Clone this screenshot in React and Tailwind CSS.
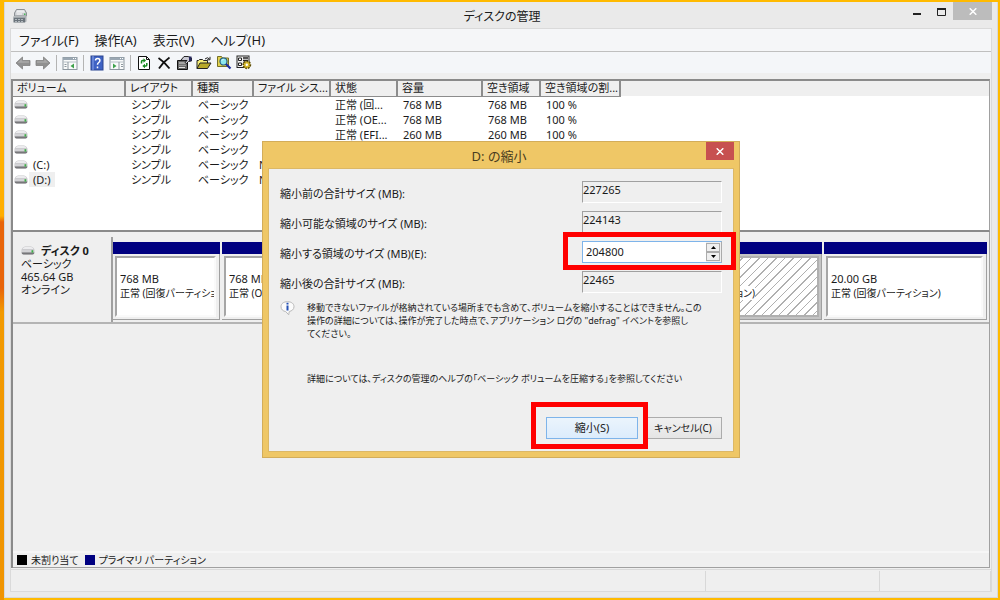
import { useState } from "react";

const columns = [
  { name: "ボリューム", width: "w-[112px]" },
  { name: "レイアウト", width: "w-[67px]" },
  { name: "種類", width: "w-[61px]" },
  { name: "ファイル シス...", width: "w-[77px]" },
  { name: "状態", width: "w-[67px]" },
  { name: "容量", width: "w-[85px]" },
  { name: "空き領域", width: "w-[58px]" },
  { name: "空き領域の割...", width: "w-[80px]" },
];

const volumes = [
  { id: 1, name: "", fs: "", status: "正常 (回...", size: "768 MB", free: "768 MB", rate: "100 %" },
  { id: 2, name: "", fs: "", status: "正常 (OE...", size: "768 MB", free: "768 MB", rate: "100 %" },
  { id: 3, name: "", fs: "", status: "正常 (EFI...", size: "260 MB", free: "260 MB", rate: "100 %" },
  { id: 4, name: "", fs: "" },
  { id: 5, name: "(C:)", fs: "NTFS" },
  { id: 6, name: "(D:)", fs: "NTFS", selected: true },
];

const partitions = [
  { id: 1, size: "768 MB", status: "正常 (回復パーティション)", width: "w-[107px]" },
  { id: 2, size: "768 MB", status: "正常 (OEM)", width: "w-[107px]" },
  { id: 3, size: "", status: "", width: "flex-1" },
  { id: 4, size: "", status: "正常 (プライマリ パーティション)", width: "w-[210px]", hatched: true },
  { id: 5, size: "20.00 GB", status: "正常 (回復パーティション)", width: "w-[163px]" },
];

function DriveIcon() {
  return (
    <svg width="14" height="9" viewBox="0 0 14 9" className="shrink-0">
      <path d="M4 .5h6q2.200 0 3.200 2.600.3.700.3 1.900v1.500q0 2-2 2h-9q-2 0-2-2V5q0-1.200.3-1.900Q1.800.5 4 .5z" fill="#c6c6c8" />
      <path d="M4 1h6q1.700 0 2.600 2H1.400Q2.300 1 4 1z" fill="#ececee" />
      <path d="M1 3.600h12v2.600H1z" fill="#d3d3d6" />
      <path d="M.6 6.600h12.800q-.1 1.900-1.900 1.900h-9Q.7 8.500.6 6.600z" fill="#77777a" />
      <rect x="10.500" y="4.200" width="1.800" height="2.400" fill="#3fae49" />
    </svg>
  );
}

function AppIcon() {
  return (
    <svg width="16" height="16" viewBox="0 0 16 16">
      <path d="M4.500 1.500h8l2 3.500v3h-12V5z" fill="#c9cccf" stroke="#8d9195" />
      <path d="M5 2.300h7l1.200 2.400H4z" fill="#eceeef" />
      <path d="M4.500 6h5.500" stroke="#fff" />
      <rect x="12" y="5.500" width="1.500" height="1.500" fill="#49b857" />
      <path d="M1.500 8.500h11.500v6H1.500z" fill="#6b747b" />
      <path d="M13 8.500l1.500-1v6L13 14.500z" fill="#a9aeb2" />
      <path d="M1.500 9h11.500" stroke="#d5d8da" />
      <path d="M3 11.500h2M6 11.500h2M9 11.500h2M3 13.500h2M6 13.500h2M9 13.500h2" stroke="#b3b9be" />
    </svg>
  );
}

function ArrowIcon({ right }) {
  return (
    <svg width="16" height="14" viewBox="0 0 16 14" className={right ? "-scale-x-100" : ""}>
      <path d="M1 7l6.500-6v3.500H15v5H7.500V13z" fill="#919191" stroke="#808080" strokeWidth=".8" />
      <path d="M2.500 6.800L6.800 3v2.300H14v1.500z" fill="#a9a9a9" />
    </svg>
  );
}

function PaneIcon({ right }) {
  return (
    <svg width="16" height="14" viewBox="0 0 16 14">
      <rect x="1" y="1.500" width="14" height="12" fill="#f9fafa" stroke="#8d979f" />
      <rect x="1" y="1.500" width="14" height="2.500" fill="#9aa7b3" />
      <path d="M11 2.500h1M13 2.500h1" stroke="#fff" />
      <path d="M1 6h14" stroke="#b6bfc6" />
      <path d={right ? "M10 6v7.500M12 8.500h2M12 10.500h2" : "M6 6v7.500M2.500 8.500h2M2.500 10.500h2"} stroke="#8d979f" />
      <path d={right ? "M4 7.500v5L7.500 10z" : "M12 7.500v5L8.500 10z"} fill="#3fa24c" />
    </svg>
  );
}

function HelpIcon() {
  return (
    <svg width="14" height="16" viewBox="0 0 14 16">
      <rect x="1" y="1" width="12" height="14" fill="#3e62c4" stroke="#2b448f" />
      <path d="M3 1v14" stroke="#8aa4ea" />
      <path d="M5.500 5.500q0-2 2.200-2t2.200 2q0 1.200-1.200 2T7.500 9.800M7.500 11.500v1.700" fill="none" stroke="#fff" strokeWidth="1.500" />
    </svg>
  );
}

function RefreshIcon() {
  return (
    <svg width="14" height="16" viewBox="0 0 14 16">
      <path d="M1.500 1.500h8l3 3v10h-11z" fill="#fff" stroke="#111" />
      <path d="M9.500 1.500v3h3" fill="none" stroke="#111" />
      <path d="M4.500 8.500V6.500q0-1 1-1H7" fill="none" stroke="#16891f" strokeWidth="1.500" />
      <path d="M6.500 3.200v4.600L9 5.500z" fill="#16891f" />
      <path d="M9.800 8v2q0 1-1 1H7.500" fill="none" stroke="#16891f" strokeWidth="1.500" />
      <path d="M8 8.700v4.600L5.300 11z" fill="#16891f" />
    </svg>
  );
}

function DeleteIcon() {
  return (
    <svg width="14" height="14" viewBox="0 0 14 14">
      <path d="M1.500 2q6 4 11 10.500M12.500 1.500Q6 6 2 12.500" fill="none" stroke="#111" strokeWidth="1.800" />
    </svg>
  );
}

function PropertiesIcon() {
  return (
    <svg width="16" height="16" viewBox="0 0 16 16">
      <path d="M1.500 5.500h10v9h-10z" fill="#666" stroke="#111" />
      <path d="M3 8h7M3 12.500h6" stroke="#e4e4e4" />
      <path d="M3 10.300h7" stroke="#a5a5a5" />
      <path d="M5 5l3-3.500h4L15.500 3v3l-3 .5-2 2-1.500-1L11 5.500H7z" fill="#c9c9d3" stroke="#111" strokeWidth=".9" />
      <path d="M13 1.500h2.500V6H13z" fill="#27275c" />
    </svg>
  );
}

function FolderIcon() {
  return (
    <svg width="16" height="14" viewBox="0 0 16 14">
      <path d="M1 12.500V4.500h1.500L3.500 3.500h3l1 1h4v2.500" fill="#f6ee77" stroke="#222" />
      <path d="M1 12.500L4 7h11l-3.500 5.500z" fill="#b8a92a" stroke="#222" />
      <path d="M9 3q2.500-2.500 4.500 0M14 .8v3h-3" fill="none" stroke="#222" />
    </svg>
  );
}

function SearchIcon() {
  return (
    <svg width="16" height="15" viewBox="0 0 16 15">
      <path d="M1.500 1.500h4l1 1.500h6v8.500h-11z" fill="#e3d24e" stroke="#777025" />
      <circle cx="7.500" cy="6.500" r="3.500" fill="#8be7ee" stroke="#245f84" strokeWidth="1.200" />
      <path d="M6 5.500L7.500 4" stroke="#fff" />
      <path d="M10 9l4.500 4.500" stroke="#1e2d9c" strokeWidth="2.200" />
    </svg>
  );
}

function SettingsIcon() {
  return (
    <svg width="16" height="15" viewBox="0 0 16 15">
      <rect x="1" y="1" width="12" height="11.500" fill="#f4f4f4" stroke="#222" />
      <path d="M2.500 3h3v2.500h-3zM2.500 8h3v2.500h-3z" fill="#fff" stroke="#222" />
      <path d="M7 3h5M7 5.500h5M7 8h2" stroke="#222" strokeWidth="1.300" />
      <circle cx="10.800" cy="9.800" r="3.600" fill="#d6b92b" stroke="#5d4d0a" strokeDasharray="1.600 1.100" strokeWidth="1.600" />
      <circle cx="10.800" cy="9.800" r="1.200" fill="#fff" />
    </svg>
  );
}

function InfoIcon() {
  return (
    <svg width="15" height="15" viewBox="0 0 15 15" className="shrink-0">
      <path d="M7.500 .7c4 0 6.500 2 6.500 5 0 2.700-2.200 4.300-4.700 4.800l-.6 3.300-3-3.200C3 10.200 1 8.400 1 5.700c0-3 2.500-5 6.500-5z" fill="#fbfbfb" stroke="#b9b9b9" />
      <path d="M6.500 1.800h2v1.700h-2zM6.500 4.500h2v5h-2z" fill="#2450b4" />
    </svg>
  );
}

function ToolButton({ label, children }) {
  return (
    <button aria-label={label} className="flex h-5 w-5 items-center justify-center">
      {children}
    </button>
  );
}

function Separator() {
  return <div className="mx-[3px] h-4 w-px bg-[#b4b4b4]" />;
}

function Toolbar() {
  return (
    <div className="flex h-[21px] items-center bg-[#f4f6f9] pl-0.5">
      <ToolButton label="戻る"><ArrowIcon /></ToolButton>
      <ToolButton label="進む"><ArrowIcon right /></ToolButton>
      <Separator />
      <ToolButton label="コンソール ツリー"><PaneIcon /></ToolButton>
      <Separator />
      <ToolButton label="ヘルプ"><HelpIcon /></ToolButton>
      <ToolButton label="操作ウィンドウ"><PaneIcon right /></ToolButton>
      <Separator />
      <ToolButton label="最新の情報に更新"><RefreshIcon /></ToolButton>
      <ToolButton label="削除"><DeleteIcon /></ToolButton>
      <ToolButton label="プロパティ"><PropertiesIcon /></ToolButton>
      <ToolButton label="開く"><FolderIcon /></ToolButton>
      <ToolButton label="検索"><SearchIcon /></ToolButton>
      <ToolButton label="設定"><SettingsIcon /></ToolButton>
    </div>
  );
}

function VolumeTable() {
  return (
    <div className="h-[153px] border-2 border-r border-[#8a8a8a] border-r-[#a0a0a0] bg-white">
      <table className="w-full table-fixed border-collapse text-left">
        <thead>
          <tr className="h-[15px] bg-[#efefef] leading-[14px]">
            {columns.map((col) => (
              <th
                key={col.name}
                className={`${col.width} overflow-hidden border-r-2 border-b border-[#8c8c8c] pl-1 font-normal whitespace-nowrap`}
              >
                {col.name}
              </th>
            ))}
            <td></td>
          </tr>
        </thead>
        <tbody>
          {volumes.map((v) => (
            <tr key={v.id} className="h-[15px] leading-[15px] whitespace-nowrap">
              <td>
                <div className="flex h-[15px] items-center gap-px pl-px">
                  <DriveIcon />
                  <span className={`px-1 ${v.selected ? "bg-[#efefef]" : ""}`}>{v.name}</span>
                </div>
              </td>
              <td className="pl-1.5">シンプル</td>
              <td className="pl-1.5">ベーシック</td>
              <td className="pl-1.5">{v.fs}</td>
              <td className="pl-[5px]">{v.status}</td>
              <td className="pl-1.5">{v.size}</td>
              <td className="pl-1.5">{v.free}</td>
              <td className="pl-1.5">{v.rate}</td>
              <td></td>
            </tr>
          ))}
        </tbody>
      </table>
    </div>
  );
}

function Partition({ part }) {
  return (
    <div className={`${part.width} flex shrink-0 flex-col`}>
      <div className="h-3 bg-[#000080]" />
      <div
        className={`h-[66px] border-r border-b border-[#a0a0a0] p-0.5 ${
          part.hatched ? "bg-[#c4c4c4]" : "pr-[3px]"
        }`}
      >
        <div
          className={`h-full overflow-hidden border-2 pl-[3px] leading-[14px] whitespace-nowrap ${
            part.hatched
              ? "border-[#b0b0b0] bg-[repeating-linear-gradient(135deg,#fff_0px,#fff_5px,#b0b0b0_5px,#b0b0b0_6px)]"
              : "border-t-[#a6a6a6] border-r-[#fafafa] border-b-[#fafafa] border-l-[#a6a6a6] bg-white"
          }`}
        >
          <div className="h-[14px]" />
          <div className="h-[14px]">{part.size}</div>
          <span className={part.hatched ? "bg-white text-[10px]" : "text-[10px]"}>{part.status}</span>
        </div>
      </div>
    </div>
  );
}

function DiskPane() {
  return (
    <div className="flex flex-1 flex-col border-r border-l-2 border-[#a0a0a0] border-l-[#8a8a8a] pt-[5px]">
      <div className="flex h-[87px] border-b-2 border-[#b4b4b4]">
        <div className="w-[100px] border-r-2 border-[#a0a0a0] pt-[7px] pl-2 leading-[13px]">
          <div className="flex items-center gap-1.5 font-bold">
            <DriveIcon />
            ディスク 0
          </div>
          <div>ベーシック</div>
          <div>465.64 GB</div>
          <div>オンライン</div>
        </div>
        <div className="flex flex-1 gap-0.5 pt-[5px] pr-0.5">
          {partitions.map((part) => (
            <Partition key={part.id} part={part} />
          ))}
        </div>
      </div>
      <div className="flex-1" />
      <div className="flex h-[17px] items-center border-t-2 border-b border-t-[#f6f6f6] border-b-[#a0a0a0] pl-1 text-[10px]">
        <div className="mr-1 h-2.5 w-2.5 bg-black" />
        未割り当て
        <div className="mr-1 ml-1.5 h-2.5 w-2.5 bg-[#000080]" />
        プライマリ パーティション
      </div>
    </div>
  );
}

function SizeField({ id, label, value }) {
  return (
    <div className="flex h-[22px] items-center justify-between">
      <label htmlFor={id} className="pt-1">{label}</label>
      <input
        id={id}
        readOnly
        value={value}
        className="h-[22px] w-[140px] border border-t-[#a0a0a0] border-r-white border-b-white border-l-[#a0a0a0] bg-[#efefef] pb-1.5 outline-none"
      />
    </div>
  );
}

function ShrinkDialog() {
  const [size, setSize] = useState(204800);
  const total = 227265;

  return (
    <div className="absolute inset-0 flex items-center justify-center">
      <div
        role="dialog"
        aria-labelledby="dialog-title"
        className="w-[478px] border border-[#d3ad5a] bg-[#efc766] px-[5px] pb-[5px]"
      >
        <div className="flex h-[26px]">
          <h2 id="dialog-title" className="flex-1 pt-1 pl-6 text-center text-[13px] leading-5 text-[#4a3d20]">
            D: の縮小
          </h2>
          <button aria-label="閉じる" className="flex h-[18px] w-7 items-center justify-center bg-[#c75050]">
            <svg width="8" height="7" viewBox="0 0 8 7">
              <path d="M.7 .3l6.600 6.400M7.300 .3L.7 6.700" stroke="#fff" strokeWidth="1.500" />
            </svg>
          </button>
        </div>

        <div className="border border-[#dcb866] bg-[#efefef] px-[11px] py-3">
          <div className="flex flex-col gap-2">
            <SizeField id="before" label="縮小前の合計サイズ (MB):" value={total} />
            <SizeField id="available" label="縮小可能な領域のサイズ (MB):" value={224143} />
            <div className="flex h-[22px] items-center justify-between">
              <label htmlFor="shrink" className="pt-1">縮小する領域のサイズ (MB)(E):</label>
              <div className="relative z-10 flex h-[22px] w-[140px] border border-[#7eb4ea] border-r-[#ababab] bg-white">
                <input
                  id="shrink"
                  inputMode="numeric"
                  value={size}
                  onChange={(e) => setSize(Number(e.target.value) || 0)}
                  className="w-full min-w-0 flex-1 pl-[3px] outline-none"
                />
                <div className="flex w-[15px] flex-col bg-[#efefef] py-px pr-px">
                  <button
                    aria-label="増やす"
                    onClick={() => setSize(size + 1)}
                    className="flex flex-1 items-center justify-center border border-[#acacac]"
                  >
                    <svg width="5" height="3" viewBox="0 0 5 3"><path d="M0 3L2.500 0 5 3z" /></svg>
                  </button>
                  <button
                    aria-label="減らす"
                    onClick={() => setSize(size - 1)}
                    className="flex flex-1 items-center justify-center border border-[#acacac]"
                  >
                    <svg width="5" height="3" viewBox="0 0 5 3"><path d="M0 0l2.500 3L5 0z" /></svg>
                  </button>
                </div>
                <div className="pointer-events-none absolute -top-2.5 -right-[15px] -bottom-2 -left-5 border-5 border-[#ff0000]" />
              </div>
            </div>
            <SizeField id="after" label="縮小後の合計サイズ (MB):" value={total - size} />
          </div>

          <div className="mt-2 flex gap-3 text-[9px] leading-[13px] whitespace-nowrap">
            <InfoIcon />
            <div>
              <p>
                移動できないファイルが格納されている場所までも含めて、ボリュームを縮小することはできません。この
                <br />
                操作の詳細については、操作が完了した時点で、アプリケーション ログの "defrag" イベントを参照し
                <br />
                てください。
              </p>
              <p className="mt-8">
                詳細については、ディスクの管理のヘルプの「ベーシック ボリュームを圧縮する」を参照してください
              </p>
            </div>
          </div>

          <div className="mt-8 flex justify-end gap-1.5">
            <div className="relative z-10">
              <button className="h-[22px] w-[92px] border border-[#7eb4ea] bg-linear-to-b from-[#ebf4fc] to-[#dcecfc]">
                縮小(S)
              </button>
              <div className="pointer-events-none absolute -top-[15px] -right-2.5 -bottom-2.5 -left-[15px] border-5 border-[#ff0000]" />
            </div>
            <button className="h-[22px] w-[78px] border border-[#acacac] bg-linear-to-b from-[#f0f0f0] to-[#e5e5e5] text-[10px]">
              キャンセル(C)
            </button>
          </div>
        </div>
      </div>
    </div>
  );
}

export default function App() {
  return (
    <div className="flex h-screen bg-[#ffba00] text-[11px] text-[#1a1a1a] [font-family:'Noto_Sans','Noto_Sans_CJK_JP',sans-serif] [font-feature-settings:'palt']">
      <div className="w-1 bg-[linear-gradient(#ffb900_0%,#ffae00_36%,#e8640a_37%,#e8640a_48%,#f29a00_52%,#f09400_100%)]" />
      <div className="relative my-0.5 mr-0.5 flex flex-1 flex-col border border-t-0 border-[#d8d8d8] bg-[#eaeaea] px-[5px] pb-[5px]">
        <div className="flex h-[26px] items-start">
          <div className="flex flex-1 items-center pt-1.5 pl-0.5">
            <AppIcon />
          </div>
          <h1 className="pt-[5px] text-[12px] leading-5">ディスクの管理</h1>
          <div className="flex flex-1 items-start justify-end">
            <button aria-label="最小化" className="flex h-5 w-6 items-center justify-center">
              <svg width="8" height="8" viewBox="0 0 8 8"><path d="M0 5h8v2H0z" fill="#222" /></svg>
            </button>
            <button aria-label="最大化" className="flex h-5 w-6 items-center justify-center">
              <svg width="9" height="8" viewBox="0 0 9 8">
                <path d="M.5 1.500h8v6h-8z" fill="none" stroke="#222" />
                <path d="M0 0h9v2H0z" fill="#222" />
              </svg>
            </button>
            <button aria-label="閉じる" className="flex h-[18px] w-[39px] items-center justify-center bg-[#bcbcbc]">
              <svg width="8" height="7" viewBox="0 0 8 7">
                <path d="M.7 .3l6.600 6.400M7.300 .3L.7 6.700" stroke="#fff" strokeWidth="1.500" />
              </svg>
            </button>
          </div>
        </div>

        <div className="flex flex-1 flex-col border border-[#dadada] bg-[#efefef]">
          <nav className="flex h-[23px] items-center gap-4 border-b border-[#bfbfbf] bg-[#f5f6f8] pt-0.5 pl-2 text-[13px]">
            <button>ファイル(F)</button>
            <button>操作(A)</button>
            <button>表示(V)</button>
            <button>ヘルプ(H)</button>
          </nav>
          <Toolbar />
          <div className="mt-1.5 mr-px flex flex-1 flex-col">
            <VolumeTable />
            <DiskPane />
          </div>
          <div className="mt-px flex h-[22px] border-t border-[#dadada] pt-px">
            <div className="flex-1 border-r border-[#d8d8d8]" />
            <div className="w-[174px] border-r border-[#d8d8d8]" />
            <div className="w-[111px] border-r border-[#d8d8d8]" />
          </div>
        </div>

        <ShrinkDialog />
      </div>
    </div>
  );
}
